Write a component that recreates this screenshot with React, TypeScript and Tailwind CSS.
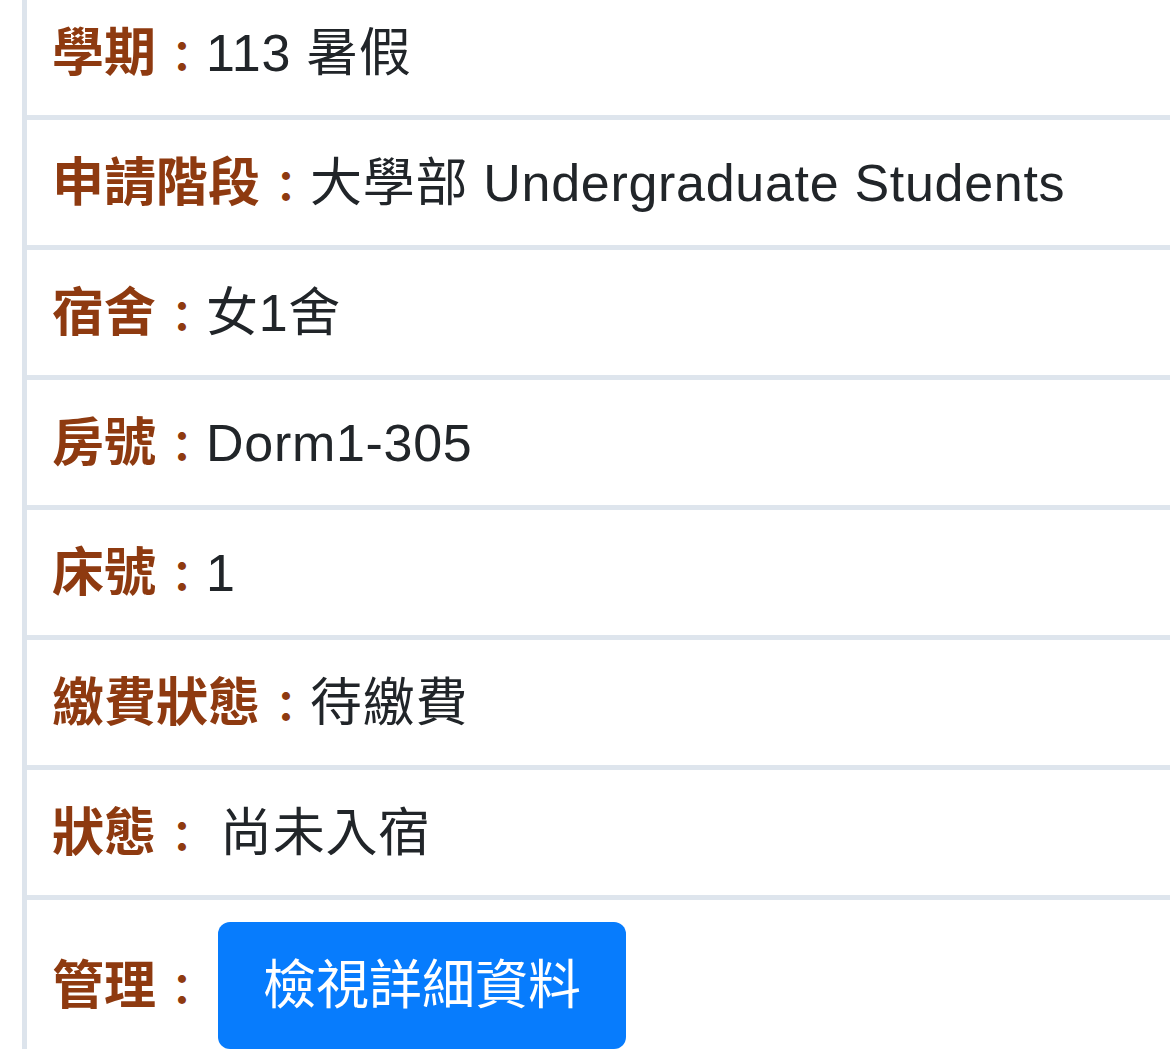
const rows: { label: string; value: string; gap?: boolean }[] = [
  { label: "學期", value: "113 暑假" },
  { label: "申請階段", value: "大學部 Undergraduate Students" },
  { label: "宿舍", value: "女1舍" },
  { label: "房號", value: "Dorm1-305" },
  { label: "床號", value: "1" },
  { label: "繳費狀態", value: "待繳費" },
  { label: "狀態", value: "尚未入宿", gap: true },
];

const font = { fontFamily: '"Liberation Sans", "Noto Sans CJK TC", sans-serif' };

function Label({ text }: { text: string }) {
  return (
    <span className="flex items-center font-bold text-[#8e3a10]">
      {text}
      <span className="inline-flex w-[52px] translate-y-[5px] justify-center text-[42px]">：</span>
    </span>
  );
}

export default function App() {
  return (
    <div className="h-[1063px] w-[1170px] overflow-hidden bg-white" style={font}>
      <div className="-mt-[10px] ml-[22px] border-l-[5px] border-[#dde4ec]">
        {rows.map((r) => (
          <div
            key={r.label}
            className="flex h-[130px] items-center border-b-[5px] border-[#dee5ed] pl-[25px] text-[52px] leading-none"
          >
            <Label text={r.label} />
            <span className={`tracking-[0.7px] text-[#212529] ${r.gap ? "ml-[12px]" : "-ml-[2px]"}`}>
              {r.value}
            </span>
          </div>
        ))}
        <div className="flex items-center pl-[25px] pt-[22px] text-[52px] leading-none">
          <Label text="管理" />
          <button className="ml-[10px] flex h-[127px] w-[408px] items-center justify-center rounded-[12px] bg-[#077cfd] text-[53px] text-white">
            檢視詳細資料
          </button>
        </div>
      </div>
    </div>
  );
}
